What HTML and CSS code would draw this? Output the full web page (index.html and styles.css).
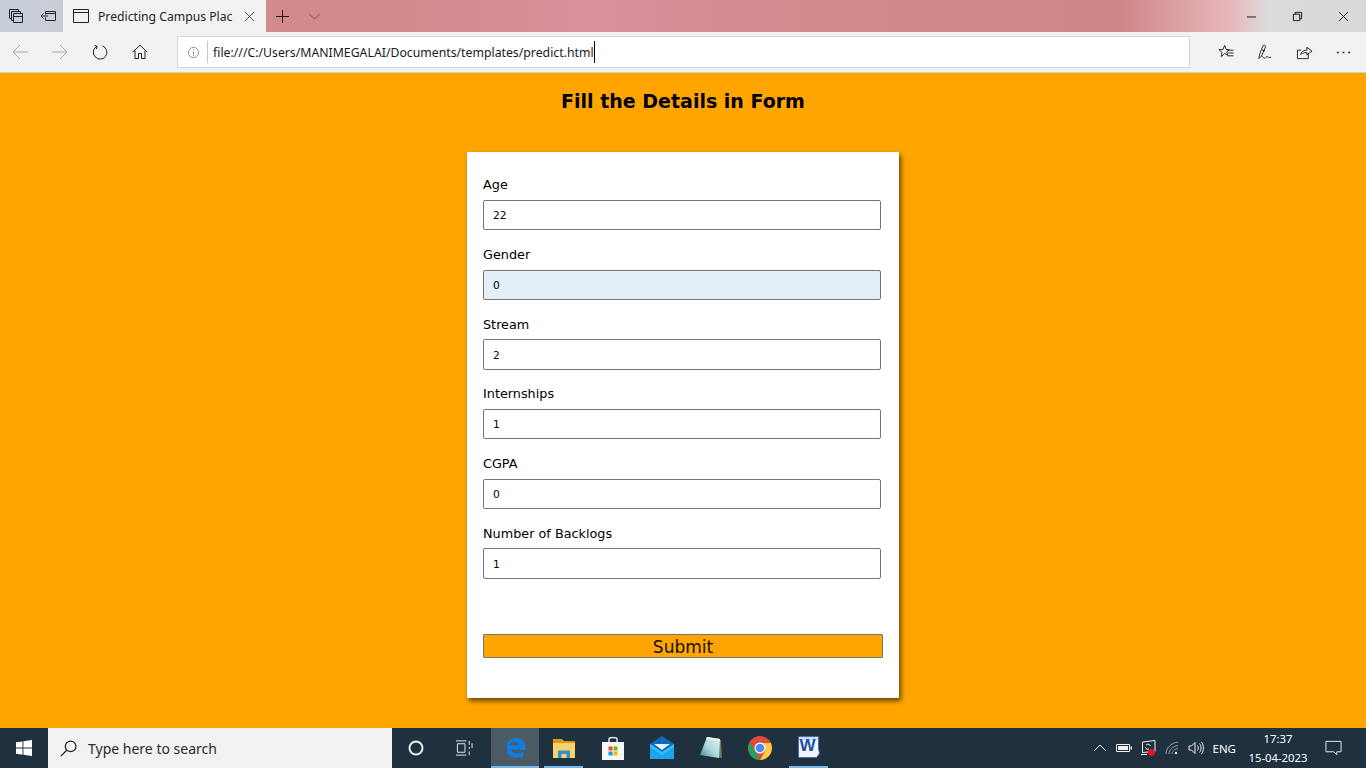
FILE: index.html
```html
<!DOCTYPE html>
<html lang="en">
<head>
    <meta charset="UTF-8">
    <meta name="viewport" content="width=device-width, initial-scale=1.0">
    <title>Predicting Campus Placement</title>
    <link rel="stylesheet" href="styles.css">
</head>
<body>
    <div class="titlebar">
        <div class="tab-tools">
            <svg class="tool-icon" viewBox="0 0 16 16"><path d="M1.500 1.500h9v2M1.500 1.500v9h2M3.500 3.500h9v2M3.500 3.500v9h2M5.500 5.500h9v9h-9zM5.500 8.500h9" /></svg>
            <svg class="tool-icon" viewBox="0 0 16 16"><path d="M5.500 3.500h10v9h-10v-3M5.500 3.500v3M5.500 5.500h10M8 8H1M3.500 5.500L1 8l2.500 2.500" /></svg>
        </div>
        <div class="tab">
            <svg class="tab-page" viewBox="0 0 16 14"><path d="M.5.5h15v13H.5zM.5 3.500h15" /></svg>
            <span class="tab-title">Predicting Campus Plac</span>
            <svg class="tab-close" viewBox="0 0 12 12"><path d="M1 1l10 10M11 1L1 11" /></svg>
        </div>
        <div class="tab-actions">
            <svg class="plus" viewBox="0 0 14 14"><path d="M7 0v14M0 7h14" /></svg>
            <svg class="chevron" viewBox="0 0 14 8"><path d="M1 1l6 6 6-6" /></svg>
        </div>
        <div class="window-buttons">
            <svg class="win-btn" viewBox="0 0 12 12"><path d="M1 6.500h10" /></svg>
            <svg class="win-btn" viewBox="0 0 12 12"><path d="M1.500 3.500h7v7h-7zM3.500 3.500v-2h7v7h-2" /></svg>
            <svg class="win-btn" viewBox="0 0 12 12"><path d="M1 1l10 10M11 1L1 11" /></svg>
        </div>
    </div>

    <div class="toolbar">
        <div class="nav-buttons">
            <svg class="nav-icon dim" viewBox="0 0 16 16"><path d="M16 8H1M8 1L1 8l7 7" /></svg>
            <svg class="nav-icon dim" viewBox="0 0 16 16"><path d="M0 8h15M8 1l7 7-7 7" /></svg>
            <svg class="nav-icon" viewBox="0 0 16 16"><path d="M5 2.200A6.800 6.800 0 1 0 10.500 1.900M2.500 1.200L5.300 2.400 4.400 5.200" /></svg>
            <svg class="nav-icon" viewBox="0 0 16 16"><path d="M.8 8L8 1.200 15.200 8M3 6.500v8h3.500V9.500h3v5H13v-8" /></svg>
        </div>
        <div class="address">
            <svg class="info" viewBox="0 0 14 14"><circle cx="7" cy="7" r="5.500" /><path d="M7 6v4.500M7 3.500v1.200" /></svg>
            <span class="url">file:///C:/Users/MANIMEGALAI/Documents/templates/predict.html</span>
        </div>
        <div class="tool-buttons">
            <svg class="nav-icon" viewBox="0 0 18 18"><path d="M7 1.500l1.700 4.300 3.300.2-2.600 2.300.8 3.700L7 10l-3.600 3.500.9-4.600L1 6l4.300-.2zM10 6.500h6.500M11 9.500h5.500M10 12.500h6.500" /></svg>
            <svg class="nav-icon" viewBox="0 0 18 18"><path d="M2 15.500c.3-3 2-9 4.500-13.500 1-1.300 2.800-.6 2.500 1L5 12.500zM5 6l3.500 1.500M5 13c1.500 0 1.500 2 3 2s1.500-2 3-1.500 1.500 1.500 4 .5" /></svg>
            <svg class="nav-icon" viewBox="0 0 18 18"><path d="M13 10v5.500H1.500V6.500h4M5 11c.5-3 3-4.500 6.500-4.500V3.500l5.500 4-5.500 4V9C9 9 7 9.500 5 11z" /></svg>
            <svg class="nav-icon dots" viewBox="0 0 18 18"><path d="M2 9h2M8 9h2M14 9h2" /></svg>
        </div>
    </div>

    <main class="page">
        <h1 class="page-title">Fill the Details in Form</h1>
        <form class="card">
            <div class="field">
                <label class="field-label">Age</label>
                <input class="field-input" type="text" value="22">
            </div>
            <div class="field">
                <label class="field-label">Gender</label>
                <input class="field-input filled" type="text" value="0">
            </div>
            <div class="field">
                <label class="field-label">Stream</label>
                <input class="field-input" type="text" value="2">
            </div>
            <div class="field">
                <label class="field-label">Internships</label>
                <input class="field-input" type="text" value="1">
            </div>
            <div class="field">
                <label class="field-label">CGPA</label>
                <input class="field-input" type="text" value="0">
            </div>
            <div class="field">
                <label class="field-label">Number of Backlogs</label>
                <input class="field-input" type="text" value="1">
            </div>
            <button class="submit" type="button">Submit</button>
        </form>
    </main>

    <footer class="taskbar">
        <div class="start">
            <svg class="start-logo" viewBox="0 0 16 16"><path d="M0 2.300l6.500-.9v6.200H0zM7.400 1.300L16 0v7.600H7.400zM0 8.500h6.500v6.200L0 13.800zM7.400 8.500H16V16l-8.600-1.200z" /></svg>
        </div>
        <div class="search">
            <svg class="search-icon" viewBox="0 0 16 16"><circle cx="10" cy="6" r="5" /><path d="M6.300 9.700L.8 15.200" /></svg>
            <span>Type here to search</span>
        </div>
        <div class="task-btn">
            <svg class="cortana" viewBox="0 0 16 16"><circle cx="8" cy="8" r="6.500" /></svg>
        </div>
        <div class="task-btn">
            <svg class="taskview" viewBox="0 0 18 16"><path d="M0 .5h11M0 15.500h11M1.500 3.500h8v9h-8zM14 .5v4M14 7v2M14 11.500v4M17 3v5" /></svg>
        </div>
        <div class="app active">
            <svg class="app-icon edge" viewBox="0 0 24 24"><path fill="#0f7ee0" d="M1 12C2 5 7 1 13 1c6 0 10.500 4 10.500 11.500v2H7.500c.3 4.500 7 5.500 13.500 2v5.500c-8 3.500-19 1.500-19-8 0-3.500 2-6.500 5.500-8-1 1-1.600 2.300-1.800 3.500h10c0-5.500-9.500-6.500-14.700 2.500z" /></svg>
        </div>
        <div class="app running">
            <svg class="app-icon" viewBox="0 0 24 24"><path fill="#d99a1e" d="M1 3h9l2 2h11v4H1z" /><path fill="#f8d46a" d="M1 7h22v15H1z" /><path fill="#2f8fd8" d="M6 14.500h12V22h-3.500v-4h-5v4H6z" /></svg>
        </div>
        <div class="app">
            <svg class="app-icon" viewBox="0 0 24 24"><path fill="none" stroke="#e8e8e8" stroke-width="1.500" d="M8 6V3c0-2 8-2 8 0v3" /><path fill="#f6f6f6" d="M1 6h22v18H1z" /><path fill="#f25022" d="M7.500 10.500h4v4h-4z" /><path fill="#7fba00" d="M12.500 10.500h4v4h-4z" /><path fill="#00a4ef" d="M7.500 15.500h4v4h-4z" /><path fill="#ffb900" d="M12.500 15.500h4v4h-4z" /></svg>
        </div>
        <div class="app">
            <svg class="app-icon" viewBox="0 0 24 24"><path fill="#1aa6ee" d="M0 8h24v15H0z" /><path fill="#0a6cb8" d="M0 8l12-8 12 8-12 8z" /><path fill="#e6f3fa" d="M4 8h16l-8 6z" /><path fill="#39bdf5" d="M0 8l12 8 12-8v3L12 19 0 11z" /></svg>
        </div>
        <div class="app">
            <svg class="app-icon" viewBox="0 0 24 24">
                <defs>
                    <linearGradient id="pad" x1="0" y1="1" x2="1" y2="0">
                        <stop offset="0" stop-color="#3f8290" />
                        <stop offset="0.45" stop-color="#a9d8dc" />
                        <stop offset="1" stop-color="#e4f2f2" />
                    </linearGradient>
                </defs>
                <path fill="#7d7458" d="M9 2l13 2 1 18-5-1z" />
                <path fill="url(#pad)" d="M8 1l13 2-1 19L1 19z" />
                <path fill="#f2f2ea" d="M8 1l13 2-.2 2L7 3z" />
            </svg>
        </div>
        <div class="app">
            <svg class="app-icon" viewBox="0 0 24 24"><circle cx="12" cy="12" r="12" fill="#dd4b3e" /><path fill="#1da462" d="M1.600 6.500L7 15l5 9A12 12 0 0 1 1.600 6.500z" /><path fill="#ffcd40" d="M12 7h10.800A12 12 0 0 1 12 24l5-8.500z" /><circle cx="12" cy="12" r="5.500" fill="#fff" /><circle cx="12" cy="12" r="4.300" fill="#4a8af4" /></svg>
        </div>
        <div class="app running">
            <svg class="app-icon" viewBox="0 0 24 24"><path fill="#f4f6f9" stroke="#2f62b5" stroke-width="0.800" d="M1.500.5h20v12l1 5-3 4h-18z" /><path fill="#cfdaf0" d="M2 1h19v3H2z" /><text class="word-letter" x="2.500" y="15">W</text></svg>
        </div>
        <div class="tray">
            <svg class="tray-icon" viewBox="0 0 16 16"><path d="M2 11l6-6 6 6" /></svg>
            <svg class="tray-icon" viewBox="0 0 16 16"><path d="M.5 4.500h13v7H.5z" /><path class="solid" d="M2 6h10v4H2zM14.500 6.500H16v3h-1.500z" /></svg>
            <div class="tray-alert">
                <svg class="tray-icon" viewBox="0 0 16 16"><path d="M2.500 2L15 .5v11l-12.500 1zM1 14.500h6M6 5c2-1.500 4-.5 4.500 1M9 9c-1.500.5-3 0-3.500-1.500" /></svg>
                <span class="alert-dot"></span>
            </div>
            <svg class="tray-icon faint" viewBox="0 0 16 16"><path d="M2 14C2 8 7 3 14 2M5 14c0-4 4-8 9-8.500M8 14c0-2 2-5 6-5.500" /><circle class="solid" cx="12" cy="13" r="1.200" /></svg>
            <svg class="tray-icon" viewBox="0 0 16 16"><path d="M1 6h2.500L7 2.500v11L3.500 10H1zM9.500 5.500c1 1.500 1 3.500 0 5M11.500 3.500c2 2.500 2 6.500 0 9M13.500 2c2.500 3.500 2.500 8.500 0 12" /></svg>
            <span class="lang">ENG</span>
            <div class="clock">
                <span>17:37</span>
                <span>15-04-2023</span>
            </div>
            <svg class="tray-icon notify" viewBox="0 0 18 16"><path d="M1 1h16v11h-4.500v3L9 12H1z" /></svg>
        </div>
    </footer>
</body>
</html>
```

FILE: styles.css
```css
* {
    box-sizing: border-box;
}

body {
    margin: 0;
    display: flex;
    flex-direction: column;
    height: 768px;
    overflow: hidden;
    font-family: "DejaVu Sans", sans-serif;
    background-color: #ffa500;
}

svg {
    display: block;
    flex: none;
    fill: none;
    stroke: #222;
    stroke-width: 1;
}

/* title bar */
.titlebar {
    display: flex;
    flex: none;
    align-items: stretch;
    height: 32px;
    background: linear-gradient(90deg, #c6ced9 0, #c9cdd6 55px, #d38a8c 270px, #d48a8c 420px, #d9929f 590px, #d28a8c 800px, #cf8688 1120px, #e6b8bb 1230px, #dcdcdc 1270px, #d8d8d8 1366px);
}

.tab-tools {
    display: flex;
    align-items: center;
    gap: 16px;
    width: 63px;
    padding-left: 8px;
}

.tool-icon {
    width: 16px;
    height: 16px;
}

.tab {
    display: flex;
    align-items: center;
    width: 203px;
    padding-left: 10px;
    background-color: #f2f2f2;
    font-family: "Noto Sans", sans-serif;
    font-size: 12.200px;
    color: #222;
}

.tab-page {
    width: 16px;
    height: 14px;
}

.tab-title {
    width: 136px;
    margin-left: 9px;
    white-space: nowrap;
    overflow: hidden;
}

.tab-close {
    width: 11px;
    height: 11px;
    margin-left: 10px;
    stroke: #444;
}

.tab-actions {
    display: flex;
    align-items: center;
    padding-left: 10px;
}

.plus {
    width: 13px;
    height: 13px;
    stroke: #111;
}

.chevron {
    width: 13px;
    height: 7px;
    margin-left: 19px;
    stroke: #555;
}

.window-buttons {
    display: flex;
    align-items: center;
    gap: 35px;
    margin-left: auto;
    padding-right: 17px;
}

.win-btn {
    width: 11px;
    height: 11px;
    stroke: #111;
}

/* address row */
.toolbar {
    display: flex;
    flex: none;
    align-items: center;
    height: 41px;
    background-color: #f2f2f2;
    border-bottom: 1px solid #d4d4d4;
}

.nav-buttons {
    display: flex;
    align-items: center;
    gap: 24px;
    width: 177px;
    padding-left: 12px;
}

.nav-icon {
    width: 16px;
    height: 16px;
}

.nav-icon.dim {
    stroke: #a8a8a8;
}

.address {
    display: flex;
    align-items: center;
    width: 1013px;
    height: 32px;
    background-color: #fff;
    border: 1px solid #d5d5d5;
}

.info {
    width: 13px;
    height: 13px;
    margin-left: 9px;
    stroke: #8a8a8a;
}

.url {
    margin-left: 7px;
    padding: 1px 0 0 5px;
    border-left: 1px solid #c8c8c8;
    border-right: 1px solid #000;
    font-family: "Noto Sans", sans-serif;
    font-size: 12.280px;
    line-height: 21px;
    color: #1a1a1a;
}

.tool-buttons {
    display: flex;
    align-items: center;
    gap: 22px;
    padding-left: 28px;
}

.tool-buttons .nav-icon {
    width: 17px;
    height: 17px;
}

.dots {
    stroke-width: 1.500;
}

/* page */
.page {
    flex: 1;
    padding-top: 16px;
    background-color: #ffa500;
}

.page-title {
    margin: 0 0 39px;
    font-size: 19px;
    line-height: 24px;
    font-weight: bold;
    text-align: center;
    color: #000;
}

.card {
    width: 432px;
    margin: 0 auto;
    padding: 25.200px 16px 40px;
    background-color: #fff;
    box-shadow: 2px 3px 5px rgba(0, 0, 0, 0.6);
}

.field {
    margin-bottom: 16.550px;
}

.field-label {
    display: block;
    margin-bottom: 6.750px;
    font-size: 12.800px;
    line-height: 16px;
    color: #000;
}

.field-input {
    display: block;
    width: 398px;
    height: 30.400px;
    padding: 1px 9px 0;
    border: 1px solid #767676;
    border-radius: 2px;
    background-color: #fff;
    font-family: "DejaVu Sans", sans-serif;
    font-size: 10.700px;
    color: #000;
}

.field-input.filled {
    background-color: #e3f0fa;
}

.submit {
    display: block;
    width: 400px;
    height: 24px;
    margin-top: 55.150px;
    padding: 2px 0 0;
    border: 1px solid #767676;
    border-radius: 1px;
    background-color: #ffa500;
    font-family: "DejaVu Sans", sans-serif;
    font-size: 17px;
    line-height: 20px;
    color: #111;
}

/* taskbar */
.taskbar {
    display: flex;
    flex: none;
    align-items: stretch;
    height: 40px;
    background-color: #1f303e;
    color: #fff;
}

.start {
    display: flex;
    align-items: center;
    justify-content: center;
    width: 48px;
}

.start-logo {
    width: 16px;
    height: 16px;
    fill: #fff;
    stroke: none;
}

.search {
    display: flex;
    align-items: center;
    width: 344px;
    padding-left: 12px;
    background-color: #f2f2f2;
    font-family: "Noto Sans", sans-serif;
    font-size: 14px;
    color: #2b2b2b;
}

.search-icon {
    width: 17px;
    height: 17px;
    margin-right: 11px;
    stroke: #222;
    stroke-width: 1.200;
}

.task-btn {
    display: flex;
    align-items: center;
    justify-content: center;
    width: 48px;
}

.cortana {
    width: 16px;
    height: 16px;
    stroke: #f2f2f2;
    stroke-width: 2;
}

.taskview {
    width: 17px;
    height: 16px;
    stroke: #f2f2f2;
}

.app {
    display: flex;
    align-items: center;
    justify-content: center;
    width: 49px;
    padding-bottom: 1px;
}

.task-btn + .app {
    margin-left: 3px;
    width: 48px;
}

.app.active {
    background-color: #4b5a63;
    box-shadow: inset 0 -2px 0 #76b9ed;
}

.app.running {
    box-shadow: inset 5px 0 0 #1f303e, inset -5px 0 0 #1f303e, inset 0 -2px 0 #76b9ed;
}

.app-icon {
    width: 24px;
    height: 24px;
    stroke: none;
}

.app-icon.edge {
    width: 21px;
    height: 21px;
}

.word-letter {
    font-family: "Liberation Sans", sans-serif;
    font-size: 17px;
    font-weight: bold;
    fill: #1d50a2;
}

.tray {
    display: flex;
    flex: none;
    align-items: center;
    margin-left: auto;
    padding-right: 24px;
}

.tray-icon {
    width: 16px;
    height: 16px;
    margin-right: 8px;
    stroke: #f0f0f0;
}

.solid {
    fill: #f0f0f0;
    stroke: none;
}

.tray-icon.faint {
    stroke: #9aa3aa;
}

.tray-alert {
    position: relative;
}

.alert-dot {
    position: absolute;
    right: 9px;
    bottom: 0;
    width: 7px;
    height: 7px;
    border-radius: 50%;
    background-color: #e81123;
}

.lang {
    font-family: "Noto Sans", sans-serif;
    font-size: 11.500px;
}

.clock {
    display: flex;
    flex-direction: column;
    align-items: center;
    width: 64px;
    margin-left: 10px;
    font-family: "Noto Sans", sans-serif;
    font-size: 11.300px;
    line-height: 19px;
    white-space: nowrap;
}

.tray-icon.notify {
    width: 17px;
    margin: 0 0 0 15px;
}
```
